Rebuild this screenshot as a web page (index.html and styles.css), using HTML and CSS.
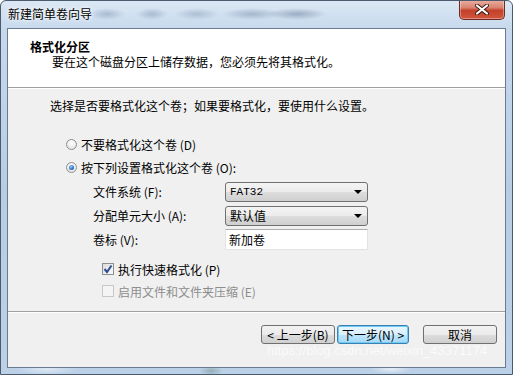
FILE: index.html
```html
<!DOCTYPE html>
<html>
<head>
  <title>新建简单卷向导</title>
  <link rel="stylesheet" href="styles.css">
</head>
<body>
  <div class="frame">
    <div class="titlebar">
      <span class="title">新建简单卷向导</span>
      <div class="blur-spots"></div>
      <button class="close-btn" aria-label="关闭">
        <svg width="16" height="11" viewBox="0 0 16 11">
          <path d="M3 1.5 L13 9.5 M13 1.5 L3 9.5" stroke="#3a1a14" stroke-width="4" stroke-linecap="round"/>
          <path d="M3 1.5 L13 9.5 M13 1.5 L3 9.5" stroke="#fff" stroke-width="2.2" stroke-linecap="round"/>
        </svg>
      </button>
    </div>

    <div class="client">
      <div class="header">
        <div class="header-title">格式化分区</div>
        <div class="header-sub">要在这个磁盘分区上储存数据，您必须先将其格式化。</div>
      </div>

      <div class="body">
        <p class="intro">选择是否要格式化这个卷；如果要格式化，要使用什么设置。</p>

        <label class="option">
          <span class="radio"></span>
          <span>不要格式化这个卷 (<u>D</u>)</span>
        </label>
        <label class="option">
          <span class="radio checked"></span>
          <span>按下列设置格式化这个卷 (<u>O</u>):</span>
        </label>

        <div class="form">
          <span class="field-label">文件系统 (<u>F</u>):</span>
          <div class="combo"><span class="mono">FAT32</span><span class="arrow"></span></div>
          <span class="field-label">分配单元大小 (<u>A</u>):</span>
          <div class="combo"><span>默认值</span><span class="arrow"></span></div>
          <span class="field-label">卷标 (<u>V</u>):</span>
          <div class="textbox">新加卷</div>
        </div>

        <label class="check">
          <span class="checkbox checked">
            <svg width="10" height="10" viewBox="0 0 10 10">
              <path d="M1.5 5 L4 8 L8.5 1.5" fill="none" stroke="#2c4f96" stroke-width="2"/>
            </svg>
          </span>
          <span>执行快速格式化 (<u>P</u>)</span>
        </label>
        <label class="check disabled">
          <span class="checkbox"></span>
          <span>启用文件和文件夹压缩 (<u>E</u>)</span>
        </label>
      </div>

      <div class="footer">
        <button class="btn">&lt; 上一步(<u>B</u>)</button>
        <button class="btn default">下一步(<u>N</u>) &gt;</button>
        <button class="btn cancel">取消</button>
      </div>
    </div>

    <div class="watermark">https://blog.csdn.net/weixin_43371174</div>
  </div>
</body>
</html>
```

FILE: styles.css
```css
html, body {
  margin: 0;
  padding: 0;
}
body {
  font-family: "Noto Sans CJK SC", "Liberation Sans", sans-serif;
  font-size: 12px;
  color: #000;
  background: #fff;
}
u {
  text-decoration: none;
}

.frame {
  position: relative;
  width: 513px;
  height: 375px;
  box-sizing: border-box;
  border: 1px solid #4b5a6c;
  border-radius: 6px 6px 0 0;
  padding: 0 6px 6px 6px;
  display: flex;
  flex-direction: column;
  overflow: hidden;
  background:
    radial-gradient(ellipse 30px 6px at 45px 368px, rgba(255,255,255,0.5), transparent),
    radial-gradient(ellipse 20px 5px at 390px 368px, rgba(255,255,255,0.6), transparent),
    radial-gradient(ellipse 12px 5px at 210px 370px, rgba(70,110,90,0.35), transparent),
    linear-gradient(180deg, #dbe7f4 0%, #c6d8ec 8%, #b8cde4 50%, #bcd1e8 100%);
}

.titlebar {
  position: relative;
  height: 27px;
  display: flex;
  align-items: center;
}
.title {
  position: relative;
  z-index: 1;
  padding-left: 1px;
  margin-top: -3px;
  text-shadow: 0 0 6px #fff, 0 0 3px #fff;
}
.blur-spots {
  position: absolute;
  inset: 0;
  background:
    radial-gradient(ellipse 18px 6px at 100px 13px, rgba(120,140,170,0.45), transparent),
    radial-gradient(ellipse 16px 6px at 145px 13px, rgba(120,140,170,0.45), transparent),
    radial-gradient(ellipse 22px 6px at 190px 13px, rgba(120,140,170,0.4), transparent),
    radial-gradient(ellipse 30px 6px at 245px 13px, rgba(120,140,170,0.5), transparent),
    radial-gradient(ellipse 30px 6px at 290px 13px, rgba(110,130,160,0.55), transparent);
}
.close-btn {
  position: absolute;
  top: -1px;
  right: 1px;
  width: 46px;
  height: 20px;
  padding: 0;
  border: 1px solid #6d2b22;
  border-top: none;
  border-radius: 0 0 5px 5px;
  background: linear-gradient(180deg, #eab1a4 0%, #d98370 40%, #c4412a 55%, #d0553c 100%);
  box-shadow: inset 0 0 0 1px rgba(255,255,255,0.35);
  display: flex;
  align-items: center;
  justify-content: center;
}

.client {
  flex: 1;
  display: flex;
  flex-direction: column;
  border: 1px solid #6a7a90;
  background: #f0f0f0;
}

.header {
  height: 59px;
  background: #fff;
  border-bottom: 1px solid #a0a0a0;
  box-shadow: 0 1px 0 #fff;
  padding-top: 10px;
  box-sizing: border-box;
}
.header-title {
  font-weight: bold;
  padding-left: 22px;
  line-height: 15px;
}
.header-sub {
  padding-left: 44px;
  line-height: 15px;
}

.body {
  flex: 1;
  padding: 10px 0 0 42px;
}
.intro {
  margin: 0 0 21px 0;
  line-height: 16px;
}
.option {
  display: flex;
  align-items: center;
  gap: 4px;
  height: 18px;
  margin: 0 0 5px 16px;
}
.radio {
  width: 11px;
  height: 11px;
  border-radius: 50%;
  border: 1px solid #8f8f8f;
  background: radial-gradient(circle at 50% 35%, #fff, #dcdcdc);
  box-sizing: border-box;
  position: relative;
}
.radio.checked::after {
  content: "";
  position: absolute;
  left: 2px;
  top: 2px;
  width: 5px;
  height: 5px;
  border-radius: 50%;
  background: radial-gradient(circle at 40% 35%, #8fd0ff, #1d5fb5 70%, #153f7c);
}

.form {
  display: grid;
  grid-template-columns: 132px 143px;
  grid-auto-rows: 21px;
  row-gap: 3px;
  margin: 1px 0 10px 43px;
  align-items: center;
}
.combo {
  height: 20px;
  box-sizing: border-box;
  border: 1px solid #707070;
  border-radius: 3px;
  background: linear-gradient(180deg, #f4f4f4 0%, #ebebeb 50%, #dddddd 51%, #cfcfcf 100%);
  display: flex;
  align-items: center;
  justify-content: space-between;
  padding: 0 5px 0 4px;
}
.mono {
  font-family: "Liberation Mono", monospace;
  font-size: 11px;
}
.arrow {
  width: 0;
  height: 0;
  border-left: 4px solid transparent;
  border-right: 4px solid transparent;
  border-top: 4px solid #000;
}
.textbox {
  height: 21px;
  box-sizing: border-box;
  border: 1px solid #e3e3e3;
  border-top-color: #abadb3;
  background: #fff;
  padding: 0 3px;
  line-height: 19px;
}

.check {
  display: flex;
  align-items: center;
  gap: 4px;
  height: 18px;
  margin: 0 0 4px 52px;
}
.checkbox {
  width: 12px;
  height: 12px;
  box-sizing: border-box;
  border: 1px solid #8e8f8f;
  background: linear-gradient(135deg, #dcdcdc, #fbfbfb);
  display: flex;
  align-items: center;
  justify-content: center;
}
.check.disabled {
  color: #8d8d8d;
}
.check.disabled .checkbox {
  border-color: #c8c8c8;
  background: #f4f4f4;
}

.footer {
  height: 42px;
  border-top: 1px solid #a0a0a0;
  box-shadow: inset 0 1px 0 #fff;
  display: flex;
  align-items: flex-start;
  padding: 13px 0 0 253px;
  box-sizing: content-box;
}
.btn {
  font-family: inherit;
  font-size: 12px;
  width: 74px;
  height: 19px;
  padding: 0;
  margin-right: 2px;
  border: 1px solid #707070;
  border-radius: 3px;
  background: linear-gradient(180deg, #f2f2f2 0%, #ebebeb 50%, #dddddd 51%, #cfcfcf 100%);
  line-height: 16px;
  white-space: nowrap;
}
.btn.default {
  width: 72px;
  border-color: #3c7fb1;
  background: linear-gradient(180deg, #eaf6fd 0%, #d9f0fc 50%, #bee6fd 51%, #a7d9f5 100%);
  box-shadow: inset 0 0 0 1px #6ecbf5;
}
.btn.cancel {
  margin-left: 12px;
}

.watermark {
  position: absolute;
  left: 266px;
  top: 342px;
  font-family: "Liberation Sans", sans-serif;
  font-size: 13px;
  color: rgba(255,255,255,0.7);
  pointer-events: none;
}
```
